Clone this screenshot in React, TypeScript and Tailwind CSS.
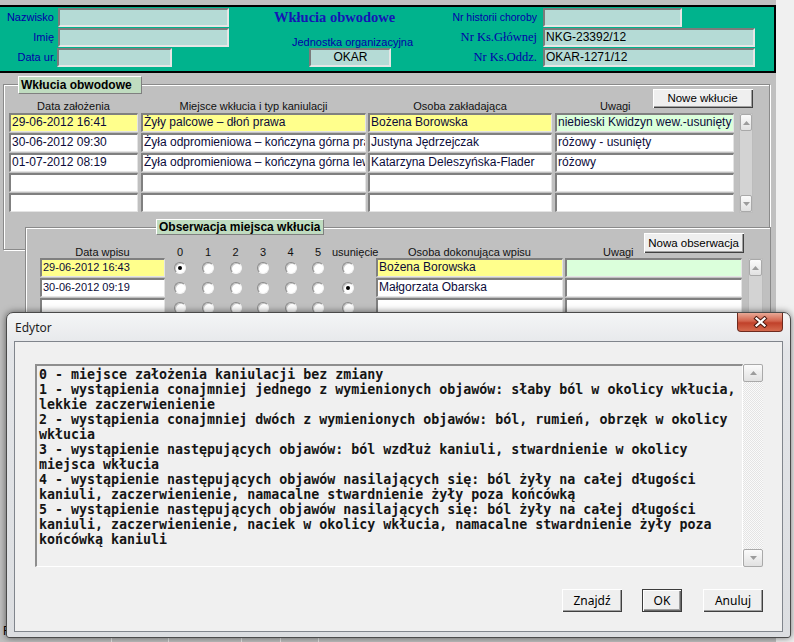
import type { ReactNode } from 'react';

const tealBox =
  'h-[19px] shrink-0 bg-[#b5dbd6] border-2 border-t-[#7b7b7b] border-l-[#7b7b7b] border-r-[#e6e6e6] border-b-[#e6e6e6] text-[12px] leading-[15px] text-black pl-[1px] whitespace-nowrap';

const raised =
  'bg-[#efefef] shadow-[inset_1px_1px_0_#ffffff,inset_-1px_-1px_0_#404040,inset_-2px_-2px_0_#a0a0a0]';

const etched = 'border border-[#8a8a8a] shadow-[inset_1px_1px_0_#ffffff,1px_1px_0_#ffffff]';

function TealField({ w, center, children }: { w: string; center?: boolean; children?: ReactNode }) {
  return <div className={`${w} ${tealBox} ${center ? 'text-center' : ''}`}>{children}</div>;
}

function Cell({ w, bg = 'bg-white', size = 'text-[12px]', children }: { w: string; bg?: string; size?: string; children?: ReactNode }) {
  return (
    <div
      className={`${w} ${bg} ${size} h-[19px] shrink-0 border-t-2 border-l-2 border-t-[#808080] border-l-[#808080] border-b border-r border-b-[#e4e4e4] border-r-[#e4e4e4] leading-[15px] pl-[1px] text-[#0b0b3a] whitespace-nowrap overflow-hidden`}
    >
      {children}
    </div>
  );
}

function ArrowBtn({ up, h }: { up?: boolean; h: string }) {
  return (
    <div className={`${h} shrink-0 bg-[linear-gradient(180deg,#fbfbfb,#e1e1e1)] border border-[#a9a9a9] rounded-[2px] flex items-center justify-center`}>
      <svg width="7" height="4" viewBox="0 0 7 4">
        <path d={up ? 'M0 4 L3.5 0 L7 4Z' : 'M0 0 L3.5 4 L7 0Z'} fill="#9c9c9c" />
      </svg>
    </div>
  );
}

function SmallScroll({ cls }: { cls: string }) {
  return (
    <div className={`${cls} shrink-0 flex flex-col bg-[#d3d3d3] border border-[#bcbcbc]`}>
      <ArrowBtn up h="h-[17px]" />
      <div className="flex-1" />
      <ArrowBtn h="h-[17px]" />
    </div>
  );
}

function Radio({ checked }: { checked?: boolean }) {
  return (
    <div className="w-[12px] h-[12px] rounded-full bg-white border border-t-[#8a8a8a] border-l-[#8a8a8a] border-r-[#f4f4f4] border-b-[#f4f4f4] shadow-[inset_1px_1px_0_#c8c8c8] flex items-center justify-center">
      {checked && <div className="w-[4px] h-[4px] rounded-full bg-black" />}
    </div>
  );
}

const yellow = 'bg-[#ffff8c]';
const green = 'bg-[#dbffdb]';

const wklucia = [
  { d: '29-06-2012 16:41', m: 'Żyły palcowe – dłoń prawa', o: 'Bożena Borowska', u: 'niebieski Kwidzyn wew.-usunięty', sel: true },
  { d: '30-06-2012 09:30', m: 'Żyła odpromieniowa – kończyna górna prawa', o: 'Justyna Jędrzejczak', u: 'różowy - usunięty' },
  { d: '01-07-2012 08:19', m: 'Żyła odpromieniowa – kończyna górna lewa', o: 'Katarzyna Deleszyńska-Flader', u: 'różowy' },
  { d: '', m: '', o: '', u: '' },
  { d: '', m: '', o: '', u: '' },
];

const obserwacje = [
  { d: '29-06-2012 16:43', o: 'Bożena Borowska', v: 0, sel: true },
  { d: '30-06-2012 09:19', o: 'Małgorzata Obarska', v: 6 },
  { d: '', o: '', v: -1 },
  { d: '', o: '', v: -1 },
];

const radioCols = ['w-[28px]', 'w-[28px]', 'w-[27px]', 'w-[28px]', 'w-[27px]', 'w-[28px]'];

const editorText = [
  '0 - miejsce założenia kaniulacji bez zmiany',
  '1 - wystąpienia conajmniej jednego z wymienionych objawów: słaby ból w okolicy wkłucia,',
  'lekkie zaczerwienienie',
  '2 - wystąpienia conajmniej dwóch z wymienionych objawów: ból, rumień, obrzęk w okolicy',
  'wkłucia',
  '3 - wystąpienie następujących objawów: ból wzdłuż kaniuli, stwardnienie w okolicy',
  'miejsca wkłucia',
  '4 - wystąpienie następujących objawów nasilających się: ból żyły na całej długości',
  'kaniuli, zaczerwienienie, namacalne stwardnienie żyły poza końcówką',
  '5 - wystąpienie następujących objawów nasilających się: ból żyły na całej długości',
  'kaniuli, zaczerwienienie, naciek w okolicy wkłucia, namacalne stwardnienie żyły poza',
  'końcówką kaniuli',
].join('\n');

function Header() {
  return (
    <div className="shrink-0 h-[68px] bg-[#00b38d] border-t-2 border-b-2 border-r-2 border-black flex pt-[1px]">
      {/* patient */}
      <div className="w-[230px] shrink-0 flex flex-col gap-[1px]">
        <div className="flex items-center h-[19px]">
          <span className="w-[58px] pr-[4px] text-right text-[11px] text-[#0000a8]">Nazwisko</span>
          <TealField w="w-[171px]" />
        </div>
        <div className="flex items-center h-[19px]">
          <span className="w-[58px] pr-[4px] text-right text-[11px] text-[#0000a8]">Imię</span>
          <TealField w="w-[171px]" />
        </div>
        <div className="flex items-center h-[19px]">
          <span className="w-[57px] pr-[1px] text-right text-[11px] text-[#0000a8] whitespace-nowrap">Data ur.</span>
          <TealField w="w-[115px]" />
        </div>
      </div>

      {/* title */}
      <div className="w-[222px] shrink-0 flex flex-col">
        <div className="ml-[44px] h-[18px] leading-[18px] text-[14.5px] font-bold font-['Liberation_Serif',serif] text-[#1515b5] whitespace-nowrap">
          Wkłucia obwodowe
        </div>
        <div className="ml-[62px] mt-[10px] text-[11px] leading-[13px] text-[#0000a8] whitespace-nowrap">Jednostka organizacyjna</div>
        <div className="ml-[79px] -mt-[1px]">
          <TealField w="w-[82px]" center>
            OKAR
          </TealField>
        </div>
      </div>

      {/* numbers */}
      <div className="flex flex-col gap-[1px]">
        <div className="flex items-center h-[19px]">
          <span className="w-[91px] pr-[6px] text-right text-[10.5px] text-[#0000a8] whitespace-nowrap">Nr historii choroby</span>
          <TealField w="w-[139px]" />
        </div>
        <div className="flex items-center h-[19px]">
          <span className="w-[91px] pr-[6px] text-right text-[12.5px] font-['Liberation_Serif',serif] text-[#0000a8] whitespace-nowrap">Nr Ks.Głównej</span>
          <TealField w="w-[212px]">NKG-23392/12</TealField>
        </div>
        <div className="flex items-center h-[19px]">
          <span className="w-[91px] pr-[6px] text-right text-[12.5px] font-['Liberation_Serif',serif] text-[#0000a8] whitespace-nowrap">Nr Ks.Oddz.</span>
          <TealField w="w-[212px]">OKAR-1271/12</TealField>
        </div>
      </div>
    </div>
  );
}

function WkluciaGroup() {
  return (
    <div className={`relative shrink-0 mt-[11px] ml-[3px] w-[767px] h-[166px] ${etched}`}>
      <div className="absolute left-[14px] -top-[9px] w-[124px] h-[18px] bg-[#c0dcc0] border border-t-white border-l-white border-r-[#808080] border-b-[#808080] text-[12px] font-bold leading-[16px] pl-[2px] text-black whitespace-nowrap">
        Wkłucia obwodowe
      </div>

      <div className="flex h-[28px] text-[11px] leading-[13px] text-[#111]">
        <div className="ml-[5px] w-[129px] self-end text-center">Data założenia</div>
        <div className="ml-[3px] w-[225px] self-end text-center whitespace-nowrap">Miejsce wkłucia i typ kaniulacji</div>
        <div className="ml-[2px] w-[184px] self-end text-center">Osoba zakładająca</div>
        <div className="ml-[48px] self-end">Uwagi</div>
        <button className={`ml-[22px] mt-[4px] self-start w-[100px] h-[19px] text-[11.5px] leading-[15px] text-black ${raised}`}>Nowe wkłucie</button>
      </div>

      <div className="flex">
        <div className="flex flex-col">
          {wklucia.map((r, i) => (
            <div key={i} className="flex h-[19px] mb-[1px]">
              <div className="ml-[5px]" />
              <Cell w="w-[129px]" bg={r.sel ? yellow : 'bg-white'}>{r.d}</Cell>
              <div className="ml-[3px]" />
              <Cell w="w-[225px]" bg={r.sel ? yellow : 'bg-white'}>{r.m}</Cell>
              <div className="ml-[2px]" />
              <Cell w="w-[184px]" bg={r.sel ? yellow : 'bg-white'}>{r.o}</Cell>
              <div className="ml-[3px]" />
              <Cell w="w-[179px]" bg={r.sel ? green : 'bg-white'}>{r.u}</Cell>
            </div>
          ))}
        </div>
        <SmallScroll cls="ml-[5px] w-[14px] h-[100px]" />
      </div>
    </div>
  );
}

function ObserwacjaGroup() {
  return (
    <div className="relative flex-1 -mt-[23px] ml-[25px] w-[746px] bg-[#c0c0c0] border-t border-l border-r border-[#8a8a8a] shadow-[inset_1px_1px_0_#ffffff]">
      <div className="absolute left-[130px] -top-[9px] w-[168px] h-[16px] bg-[#c0dcc0] border border-t-white border-l-white border-r-[#808080] border-b-[#808080] text-[12px] font-bold leading-[14px] pl-[2px] text-black whitespace-nowrap">
        Obserwacja miejsca wkłucia
      </div>

      <div className="flex h-[30px] text-[11px] leading-[12px] text-[#111]">
        <div className="ml-[14px] w-[125px] self-end text-center">Data wpisu</div>
        <div className="ml-[1px]" />
        {radioCols.map((w, i) => (
          <div key={i} className={`${w} self-end text-center`}>
            {i}
          </div>
        ))}
        <div className="w-[44px] self-end text-center">usunięcie</div>
        <div className="w-[187px] self-end text-center whitespace-nowrap">Osoba dokonująca wpisu</div>
        <div className="ml-[40px] self-end">Uwagi</div>
        <button className={`ml-[10px] mt-[5px] self-start w-[100px] h-[20px] text-[11.5px] leading-[15px] text-black ${raised}`}>Nowa obserwacja</button>
      </div>

      <div className="flex">
        <div className="flex flex-col">
          {obserwacje.map((r, i) => (
            <div key={i} className="flex h-[19px] mb-[1px]">
              <div className="ml-[14px]" />
              <Cell w="w-[125px]" size="text-[11px]" bg={r.sel ? yellow : 'bg-white'}>{r.d}</Cell>
              <div className="ml-[1px]" />
              {radioCols.map((w, j) => (
                <div key={j} className={`${w} flex items-center justify-center`}>
                  <Radio checked={r.v === j} />
                </div>
              ))}
              <div className="w-[44px] flex items-center pl-[10px]">
                <Radio checked={r.v === 6} />
              </div>
              <Cell w="w-[187px]" bg={r.sel ? yellow : 'bg-white'}>{r.o}</Cell>
              <div className="ml-[2px]" />
              <Cell w="w-[177px]" bg={r.sel ? green : 'bg-white'} />
            </div>
          ))}
        </div>
        <SmallScroll cls="ml-[6px] w-[15px] h-[100px]" />
      </div>
    </div>
  );
}

function StatusBar() {
  const cells = ['w-[112px]', 'w-[57px]', 'w-[73px]', 'w-[39px]', 'w-[38px]'];
  const texts = ['Użytkownik', '', '', 'NUM', 'INS'];
  return (
    <div className="shrink-0 h-[20px] flex text-[12px] leading-[18px] text-black">
      {cells.map((w, i) => (
        <div key={i} className={`${w} h-[20px] border-r border-r-[#e8e8e8] pl-[3px] pt-[3px] whitespace-nowrap overflow-hidden`}>
          {texts[i]}
        </div>
      ))}
      <div className="flex-1" />
    </div>
  );
}

function DlgButton({ w, def, children }: { w: string; def?: boolean; children: ReactNode }) {
  return (
    <button
      className={`${w} h-[23px] text-[12px] leading-[16px] text-black font-['Noto_Sans','Open_Sans',sans-serif] ${
        def
          ? 'bg-[#efefef] border border-[#3c3c3c] shadow-[inset_1px_1px_0_#ffffff,inset_-1px_-1px_0_#696969,inset_-2px_-2px_0_#a0a0a0]'
          : raised
      }`}
    >
      {children}
    </button>
  );
}

function Editor() {
  return (
    <div className="absolute left-[6px] top-[312px] w-[785px] h-[326px] flex flex-col rounded-t-[7px] rounded-b-[3px] border border-[#4a4a4a] bg-[linear-gradient(180deg,#f4f5f6_0%,#e3e5e8_12%,#dcdee1_100%)] shadow-[0_0_7px_rgba(0,0,0,0.55)]">
      <div className="h-[28px] shrink-0 flex">
        <div className="pl-[8px] pt-[7px] text-[12px] leading-[16px] text-[#1e1e1e] font-['Noto_Sans','Open_Sans',sans-serif]">Edytor</div>
        <button className="ml-auto mr-[7px] w-[46px] h-[19px] rounded-b-[4px] border border-t-0 border-[#6e2a1e] bg-[linear-gradient(180deg,#e9a996_0%,#d2634c_45%,#c0412a_55%,#d56a4e_100%)] flex items-center justify-center">
          <svg width="15" height="12" viewBox="0 0 15 12">
            <path d="M3.5 2.5 L11.5 9.5 M11.5 2.5 L3.5 9.5" stroke="#4d1a10" strokeWidth="4.2" strokeLinecap="square" />
            <path d="M3.5 2.5 L11.5 9.5 M11.5 2.5 L3.5 9.5" stroke="#ffffff" strokeWidth="2.2" strokeLinecap="square" />
          </svg>
        </button>
      </div>

      <div className="mx-[7px] h-[291px] shrink-0 border border-[#80858c] bg-[#f0f0f0] flex flex-col">
        <div className="flex mt-[22px] ml-[20px]">
          <div className="w-[708px] h-[203px] border-t-2 border-l-2 border-t-[#8e8e8e] border-l-[#8e8e8e] border-b border-r border-b-[#ffffff] border-r-[#ffffff] pl-[2px] pt-[1px] whitespace-pre font-['DejaVu_Sans_Mono','Liberation_Mono',monospace] font-bold text-[13.3px] leading-[15px] text-[#151515] overflow-hidden">
            {editorText}
          </div>
          <div className="w-[20px] h-[203px] flex flex-col bg-[repeating-conic-gradient(#e4e4e4_0_25%,#fafafa_0_50%)] bg-[length:2px_2px]">
            <ArrowBtn up h="h-[18px]" />
            <div className="flex-1" />
            <ArrowBtn h="h-[18px]" />
          </div>
        </div>
        <div className="flex justify-end mt-[22px] mr-[19px]">
          <DlgButton w="w-[60px]">Znajdź</DlgButton>
          <div className="w-[20px]" />
          <DlgButton w="w-[40px]" def>
            OK
          </DlgButton>
          <div className="w-[21px]" />
          <DlgButton w="w-[60px]">Anuluj</DlgButton>
        </div>
      </div>
    </div>
  );
}

export default function App() {
  return (
    <div className="relative w-[794px] h-[642px] overflow-hidden bg-[#f0f0f0] font-['Liberation_Sans',Arial,sans-serif]">
      <div className="w-[776px] h-[658px] flex flex-col bg-[#c0c0c0]">
        <div className="h-[5px] shrink-0" />
        <Header />
        <WkluciaGroup />
        <ObserwacjaGroup />
        <div className="h-[14px] shrink-0 pl-[3px] text-[12px] leading-[14px] text-black whitespace-nowrap">F1 - Pomoc</div>
        <StatusBar />
      </div>
      <Editor />
    </div>
  );
}
